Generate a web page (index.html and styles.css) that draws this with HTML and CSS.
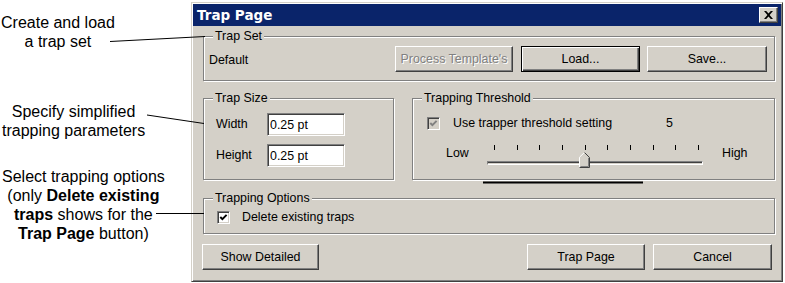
FILE: index.html
```html
<!DOCTYPE html>
<html>
<head>
<meta charset="utf-8">
<link rel="stylesheet" href="styles.css">
</head>
<body>
<div class="page">
  <div class="notes">
    <p class="note n1">Create and load<br>a trap set</p>
    <p class="note n2">Specify simplified<br>trapping parameters</p>
    <p class="note n3">Select trapping options<br>(only <b>Delete existing</b><br><b>traps</b> shows for the<br><b>Trap Page</b> button)</p>
  </div>

  <div class="dialog">
    <div class="titlebar">
      <span class="title">Trap Page</span>
      <span class="close">
        <svg width="9" height="8" viewBox="0 0 9 8"><path d="M0 0h2.2l2.3 2.6L6.8 0H9L5.6 4 9 8H6.8L4.5 5.4 2.2 8H0l3.4-4z" fill="#000"/></svg>
      </span>
    </div>

    <div class="dlg-body">
      <fieldset class="group set">
        <legend>Trap Set</legend>
        <div class="set-row">
          <span class="set-name">Default</span>
          <button class="btn disabled b-proc">Process Template's</button>
          <button class="btn default b-load">Load...</button>
          <button class="btn b-save">Save...</button>
        </div>
      </fieldset>

      <div class="mid">
        <fieldset class="group size">
          <legend>Trap Size</legend>
          <div class="size-grid">
            <span class="lbl">Width</span>
            <input class="field" type="text" value="0.25 pt">
            <span class="lbl">Height</span>
            <input class="field" type="text" value="0.25 pt">
          </div>
        </fieldset>

        <fieldset class="group thresh">
          <legend>Trapping Threshold</legend>
          <div class="thresh-body">
            <div class="check-row">
              <span class="checkbox is-disabled">
                <svg width="9" height="9" viewBox="0 0 9 9"><polyline points="1.3,4 3.4,6.2 7.6,1.8" fill="none" stroke="#808080" stroke-width="1.9"/></svg>
              </span>
              <span class="check-label wide">Use trapper threshold setting</span>
              <span class="value">5</span>
            </div>
            <div class="slider-row">
              <span class="low">Low</span>
              <div class="slider">
                <div class="ticks">
                  <i class="tick"></i><i class="tick"></i><i class="tick"></i><i class="tick"></i><i class="tick"></i>
                  <i class="tick"></i><i class="tick"></i><i class="tick"></i><i class="tick"></i><i class="tick"></i>
                </div>
                <div class="track"></div>
                <svg class="thumb" width="11" height="16" viewBox="0 0 11 16">
                  <path d="M0 16V5L5 0h1l5 5v11z" fill="#d4d0c8"/>
                  <path d="M0.5 15.5V5.2L5.3 0.6" stroke="#fff" fill="none"/>
                  <path d="M5.6 0.6L10.5 5.5V15.5H0.5" stroke="#404040" fill="none"/>
                  <path d="M9.5 5.9V14.5H1.5" stroke="#808080" fill="none"/>
                </svg>
              </div>
              <span class="high">High</span>
            </div>
          </div>
        </fieldset>
      </div>

      <fieldset class="group options">
        <legend>Trapping Options</legend>
        <div class="opt-body">
          <div class="check-row">
            <span class="checkbox">
              <svg width="9" height="9" viewBox="0 0 9 9"><polyline points="1.3,4 3.4,6.2 7.6,1.8" fill="none" stroke="#000" stroke-width="1.9"/></svg>
            </span>
            <span class="check-label">Delete existing traps</span>
          </div>
        </div>
      </fieldset>

      <div class="actions">
        <button class="btn b-show">Show Detailed</button>
        <div class="actions-right">
          <button class="btn b-trap">Trap Page</button>
          <button class="btn b-cancel">Cancel</button>
        </div>
      </div>
    </div>
  </div>

  <svg class="leaders" width="785" height="283" viewBox="0 0 785 283">
    <line x1="110" y1="41.5" x2="205" y2="36.5" stroke="#000" stroke-width="1"/>
    <line x1="147" y1="115" x2="204" y2="123.5" stroke="#000" stroke-width="1"/>
    <line x1="156" y1="213.5" x2="204" y2="213.5" stroke="#000" stroke-width="1"/>
    <line x1="483" y1="182.5" x2="643" y2="182.5" stroke="#000" stroke-width="2"/>
  </svg>
</div>
</body>
</html>
```

FILE: styles.css
```css
* { box-sizing: border-box; }

html, body {
  margin: 0;
  padding: 0;
}

body {
  width: 785px;
  height: 283px;
  overflow: hidden;
  background: #fff;
  font-family: "Liberation Sans", Arial, sans-serif;
  color: #000;
}

.page {
  position: relative;
  display: flex;
  width: 785px;
  height: 283px;
}

/* Annotations */
.notes {
  width: 191px;
  flex: none;
  display: flex;
  flex-direction: column;
  align-items: flex-start;
  font-size: 16px;
  line-height: 19px;
}

.note {
  margin: 0;
  padding-left: 1px;
  text-align: center;
}

.n1 { margin-top: 13px; }
.n2 { margin-top: 51px; padding-left: 2px; }
.n3 { margin-top: 27px; padding-left: 2px; }

.leaders {
  position: absolute;
  left: 0;
  top: 0;
  pointer-events: none;
}

/* Dialog */
.dialog {
  width: 592px;
  height: 280px;
  margin-top: 2px;
  flex: none;
  background: #d4d0c8;
  border: 1px solid;
  border-color: #d4d0c8 #404040 #404040 #d4d0c8;
  box-shadow: inset 1px 1px 0 #fff, inset -1px -1px 0 #808080;
  padding: 1px;
  display: flex;
  flex-direction: column;
  font-size: 12.4px;
}

.titlebar {
  height: 22px;
  flex: none;
  background: #0a246a;
  display: flex;
  align-items: center;
  justify-content: space-between;
  padding: 0 3px 0 4px;
}

.title {
  color: #fff;
  font-family: "DejaVu Sans", Verdana, sans-serif;
  font-weight: bold;
  font-size: 13.5px;
  line-height: 16px;
}

.close {
  width: 19px;
  height: 16px;
  background: #d4d0c8;
  border: 1px solid;
  border-color: #fff #404040 #404040 #fff;
  box-shadow: inset -1px -1px 0 #808080;
  display: flex;
  align-items: center;
  justify-content: center;
}

.dlg-body {
  flex: 1;
  padding: 3px 6px 0 10px;
  display: flex;
  flex-direction: column;
}

/* Group boxes */
.group {
  margin: 0;
  padding: 0;
  min-width: 0;
  border: 1px solid #808080;
  box-shadow: 1px 1px 0 #fff, inset 1px 1px 0 #fff;
}

.group legend {
  margin-left: 9px;
  padding: 0 2px;
  font-size: 12.4px;
  line-height: 15px;
  background: #d4d0c8;
}

.set-row {
  display: flex;
  align-items: center;
  padding: 2px 7px 8px 5px;
}

.set-name { flex: 1; padding-top: 1px; }

/* Buttons */
.btn {
  height: 26px;
  padding: 0;
  margin: 0;
  font-family: "Liberation Sans", Arial, sans-serif;
  font-size: 12.4px;
  color: #000;
  background: #d4d0c8;
  border: 1px solid;
  border-color: #fff #404040 #404040 #fff;
  box-shadow: inset -1px -1px 0 #808080;
  border-radius: 0;
}

.btn.default {
  border: 1px solid #000;
  box-shadow: inset 1px 1px 0 #fff, inset -1px -1px 0 #404040, inset -2px -2px 0 #808080;
}

.btn.disabled {
  color: #808080;
  text-shadow: 1px 1px 0 #fff;
}

.b-proc { width: 118px; }
.b-load { width: 119px; margin-left: 8px; }
.b-save { width: 120px; margin-left: 7px; }

/* Middle groups */
.mid {
  display: flex;
  gap: 18px;
  margin-top: 10px;
  align-items: stretch;
}

.size { width: 191px; flex: none; }
.thresh { width: 363px; flex: none; }

.size-grid {
  display: grid;
  grid-template-columns: 51px 78px;
  row-gap: 8px;
  align-items: center;
  padding: 7px 0 12px 12px;
}

.lbl { line-height: 15px; }

.field {
  width: 78px;
  height: 23px;
  margin: 0;
  padding: 0 0 0 2px;
  background: #fff;
  border: 1px solid;
  border-color: #808080 #fff #fff #808080;
  box-shadow: inset 1px 1px 0 #404040, inset -1px -1px 0 #d4d0c8;
  font-family: "Liberation Sans", Arial, sans-serif;
  font-size: 12.4px;
  color: #000;
  outline: none;
}

.thresh-body {
  padding: 10px 0 11px 14px;
}

.check-row {
  display: flex;
  align-items: center;
  height: 15px;
  line-height: 15px;
}

.checkbox {
  width: 13px;
  height: 13px;
  flex: none;
  background: #fff;
  border: 1px solid;
  border-color: #808080 #fff #fff #808080;
  box-shadow: inset 1px 1px 0 #404040, inset -1px -1px 0 #d4d0c8;
  display: flex;
  align-items: center;
  justify-content: center;
}

.checkbox.is-disabled { background: #d4d0c8; }

.check-label { margin-left: 12px; }
.check-label.wide { margin-left: 13px; width: 213px; }

.slider-row {
  display: flex;
  align-items: flex-start;
  margin-top: 13px;
  padding-left: 19px;
}

.low {
  width: 41px;
  line-height: 15px;
  padding-top: 2px;
}

.high {
  margin-left: 19px;
  line-height: 15px;
  padding-top: 2px;
}

.slider {
  position: relative;
  width: 216px;
  height: 24px;
}

.ticks {
  display: flex;
  justify-content: space-between;
  padding: 0 4px 0 7px;
  margin-top: 1px;
  height: 5px;
}

.tick {
  display: block;
  width: 1px;
  height: 5px;
  background: #000;
}

.track {
  margin-top: 11px;
  height: 4px;
  background: #d4d0c8;
  border-top: 1px solid #808080;
  border-left: 1px solid #808080;
  border-bottom: 1px solid #fff;
  border-right: 1px solid #fff;
  box-shadow: inset 0 1px 0 #404040;
}

.thumb {
  position: absolute;
  left: 92px;
  top: 8px;
}

/* Options */
.options { margin-top: 11px; }

.opt-body {
  padding: 4px 0 8px 13px;
}

/* Bottom actions */
.actions {
  display: flex;
  justify-content: space-between;
  margin-top: 10px;
  margin-left: -1px;
  padding-right: 3px;
}

.actions-right {
  display: flex;
  gap: 8px;
}

.b-show { width: 117px; }
.b-trap { width: 118px; }
.b-cancel { width: 119px; }
```
